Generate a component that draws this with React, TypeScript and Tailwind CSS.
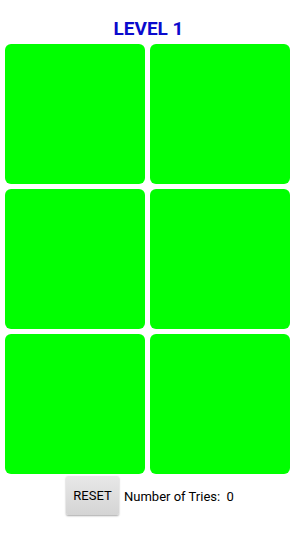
const tiles = [0, 1, 2, 3, 4, 5];

export default function App() {
  return (
    <div className="w-[300px] h-[534px] bg-white font-['Roboto',sans-serif]">
      <div className="h-[44px] flex items-end justify-center pb-[4px] pr-[3px]">
        <h1 className="text-[19px] leading-[22px] font-bold text-[#0a0acd]">LEVEL 1</h1>
      </div>
      <div className="grid grid-cols-[140px_140px] gap-[5px] pl-[5px]">
        {tiles.map((t) => (
          <div key={t} className="h-[140px] rounded-[6px] bg-[#00ff00]" />
        ))}
      </div>
      <div className="flex items-center pl-[66px] mt-[2px]">
        <button className="w-[53px] h-[39px] rounded-[2px] bg-gradient-to-b from-[#e8e8e8] to-[#d4d4d4] shadow-[0_1px_2px_rgba(0,0,0,0.35)] text-[13px] text-black">
          RESET
        </button>
        <span className="ml-[5px] text-[13px] text-black whitespace-pre mt-[2px]">Number of Tries:  0</span>
      </div>
    </div>
  );
}
